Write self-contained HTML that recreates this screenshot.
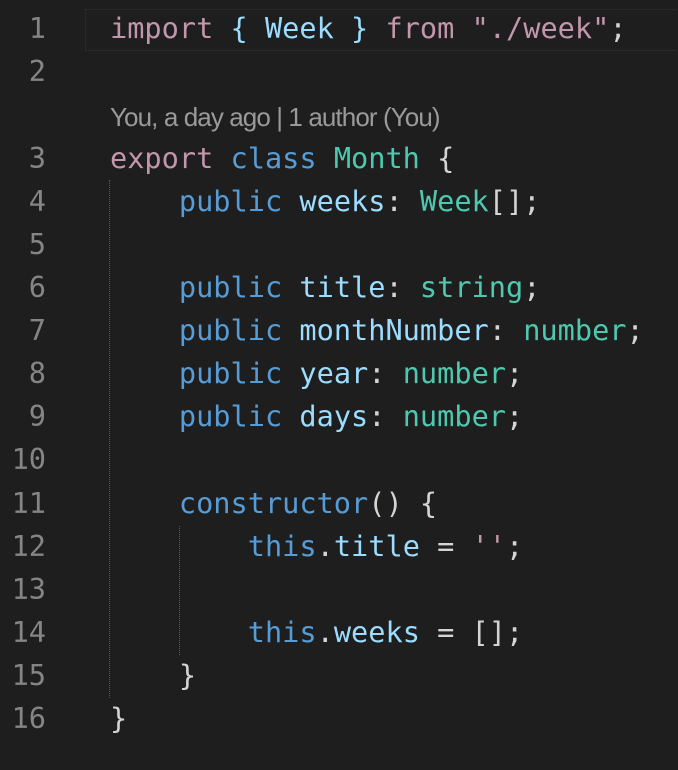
<!DOCTYPE html><html><head><style>
body{margin:0;width:678px;height:770px;background:#1e1e1e;overflow:hidden;position:relative}
.l{position:absolute;left:0;height:43px;line-height:43px;font-family:"DejaVu Sans Mono","Liberation Mono",monospace;font-size:28.6px;white-space:pre;color:#d4d4d4}
.n{position:absolute;left:0;width:46px;text-align:right;color:#858585}
.c{position:absolute;left:110px}
.k{color:#c397aa}.b{color:#569cd6}.t{color:#4ec9b0}.v{color:#9cdcfe}.s{color:#c397aa}.p{color:#d4d4d4}
.g{position:absolute;width:0;border-left:1px dotted #4f5e66}
.lens{position:absolute;left:110px;top:102px;font-family:"Liberation Sans",sans-serif;font-size:26px;color:#9a9a9a;letter-spacing:-0.9px}
</style></head><body>
<div style="position:absolute;left:85px;top:9px;width:600px;height:40px;border:1px dotted #333"></div>
<div class="g" style="left:109px;top:180px;height:518px"></div>
<div class="g" style="left:179px;top:526px;height:129px"></div>
<div class="lens">You, a day ago | 1 author (You)</div>
<div class="l" style="top:7px"><span class="n">1</span><span class="c"><span class="k">import</span> <span class="v">{</span> <span class="v">Week</span> <span class="v">}</span> <span class="k">from</span> <span class="s">"./week"</span>;</span></div>
<div class="l" style="top:50px"><span class="n">2</span></div>
<div class="l" style="top:137px"><span class="n">3</span><span class="c"><span class="k">export</span> <span class="b">class</span> <span class="t">Month</span> {</span></div>
<div class="l" style="top:180px"><span class="n">4</span><span class="c">    <span class="b">public</span> <span class="v">weeks</span>: <span class="t">Week</span>[];</span></div>
<div class="l" style="top:223px"><span class="n">5</span></div>
<div class="l" style="top:266px"><span class="n">6</span><span class="c">    <span class="b">public</span> <span class="v">title</span>: <span class="t">string</span>;</span></div>
<div class="l" style="top:309px"><span class="n">7</span><span class="c">    <span class="b">public</span> <span class="v">monthNumber</span>: <span class="t">number</span>;</span></div>
<div class="l" style="top:352px"><span class="n">8</span><span class="c">    <span class="b">public</span> <span class="v">year</span>: <span class="t">number</span>;</span></div>
<div class="l" style="top:395px"><span class="n">9</span><span class="c">    <span class="b">public</span> <span class="v">days</span>: <span class="t">number</span>;</span></div>
<div class="l" style="top:438px"><span class="n">10</span></div>
<div class="l" style="top:482px"><span class="n">11</span><span class="c">    <span class="b">constructor</span>() {</span></div>
<div class="l" style="top:525px"><span class="n">12</span><span class="c">        <span class="b">this</span>.<span class="v">title</span> = <span class="s">''</span>;</span></div>
<div class="l" style="top:568px"><span class="n">13</span></div>
<div class="l" style="top:611px"><span class="n">14</span><span class="c">        <span class="b">this</span>.<span class="v">weeks</span> = [];</span></div>
<div class="l" style="top:654px"><span class="n">15</span><span class="c">    }</span></div>
<div class="l" style="top:697px"><span class="n">16</span><span class="c">}</span></div>
</body></html>
